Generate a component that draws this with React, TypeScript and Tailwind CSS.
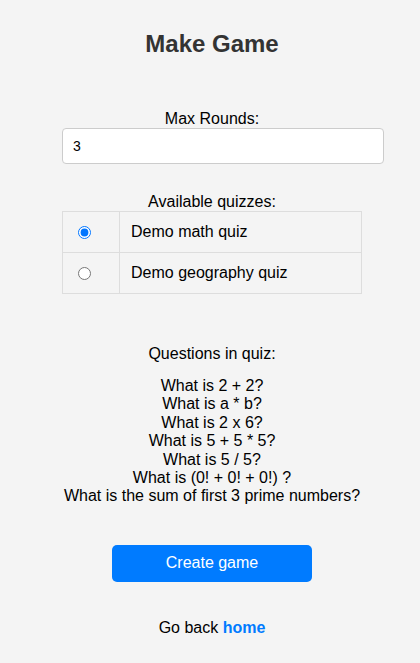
import React from "react";

const questions = [
  "What is 2 + 2?",
  "What is a * b?",
  "What is 2 x 6?",
  "What is 5 + 5 * 5?",
  "What is 5 / 5?",
  "What is (0! + 0! + 0!) ?",
  "What is the sum of first 3 prime numbers?",
];

export default function App() {
  return (
    <div
      className="min-h-[663px] bg-[#f4f4f4] text-black text-[16px]"
      style={{ fontFamily: '"Liberation Sans", Arial, sans-serif' }}
    >
      <div className="flex justify-center pl-[4px]">
        <div className="w-[300px] flex flex-col items-center">
          <h1 className="mt-[30px] text-[24px] leading-[28px] font-bold text-[#333]">Make Game</h1>

          <label className="mt-[52px] leading-[18px] text-center">Max Rounds:</label>
          <div className="w-full">
            <input
              type="text"
              defaultValue="3"
              className="box-content w-[300px] h-[16px] py-[9px] px-[10px] bg-white border border-[#ccc] rounded-[4px] text-[14px] text-black outline-none"
            />
          </div>

          <div className="mt-[29px] leading-[18px] text-center">Available quizzes:</div>
          <table className="w-full border-collapse">
            <tbody>
              <tr className="h-[41px]">
                <td className="w-[57px] border border-[#ddd] pl-[15px] text-left align-middle">
                  <input type="radio" name="quiz" defaultChecked className="m-0 align-middle" />
                </td>
                <td className="border border-[#ddd] pl-[11px] align-middle">Demo math quiz</td>
              </tr>
              <tr className="h-[41px]">
                <td className="w-[57px] border border-[#ddd] pl-[15px] text-left align-middle">
                  <input type="radio" name="quiz" className="m-0 align-middle" />
                </td>
                <td className="border border-[#ddd] pl-[11px] align-middle">Demo geography quiz</td>
              </tr>
            </tbody>
          </table>

          <div className="mt-[51px] leading-[18px] text-center">Questions in quiz:</div>
          <div className="mt-[14px] flex flex-col items-center leading-[18.4px] text-center whitespace-nowrap">
            {questions.map((q) => (
              <div key={q}>{q}</div>
            ))}
          </div>

          <button className="mt-[39px] w-[200px] h-[37px] bg-[#007bff] text-white rounded-[5px] text-[16px]">
            Create game
          </button>

          <div className="mt-[37px] leading-[18px] text-center">
            Go back <a href="#" className="font-bold text-[#007bff]">home</a>
          </div>
        </div>
      </div>
    </div>
  );
}
